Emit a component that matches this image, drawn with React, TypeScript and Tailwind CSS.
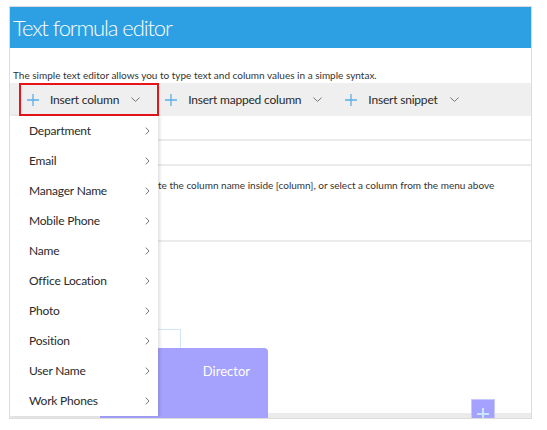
import React from "react";

const FONT = { fontFamily: '"Segoe UI", Lato, "Open Sans", sans-serif' };

const columns = [
  "Department",
  "Email",
  "Manager Name",
  "Mobile Phone",
  "Name",
  "Office Location",
  "Photo",
  "Position",
  "User Name",
  "Work Phones",
];

function Plus() {
  return (
    <svg width="12" height="12" viewBox="0 0 12 12" className="shrink-0">
      <path d="M6 0v12M0 6h12" stroke="#5aaee6" strokeWidth="1.3" fill="none" />
    </svg>
  );
}

function ChevronDown() {
  return (
    <svg width="9" height="5" viewBox="0 0 9 5" className="shrink-0">
      <path d="M0.4 0.6L4.5 4.4L8.6 0.6" stroke="#777" strokeWidth="1" fill="none" />
    </svg>
  );
}

function ChevronRight() {
  return (
    <svg width="5" height="8" viewBox="0 0 5 8" className="shrink-0">
      <path d="M0.8 0.6L4 4L0.8 7.4" stroke="#777" strokeWidth="1" fill="none" />
    </svg>
  );
}

function ToolButton({ label, active }: { label: string; active?: boolean }) {
  return (
    <div
      className={
        "flex h-[33px] shrink-0 items-center whitespace-nowrap pr-[17px] " +
        (active ? "border-2 border-[#e8141a] pl-[6px]" : "pl-[6px]")
      }
    >
      <Plus />
      <span className="ml-[11px] text-[12px] tracking-[-0.2px] text-[#2a2a2a]">{label}</span>
      <span className="ml-[12px]">
        <ChevronDown />
      </span>
    </div>
  );
}

export default function App() {
  return (
    <div className="h-[430px] w-[547px] bg-white pl-[9px] pt-[6px]" style={FONT}>
      <div className="relative flex h-[413px] w-[523px] flex-col overflow-hidden border border-[#dcdcdc]">
        <div className="flex h-[41px] shrink-0 items-center bg-[#2d9fe3] pl-[3px]">
          <span className="text-[22px] font-light leading-none tracking-[-1.1px] text-white">
            Text formula editor
          </span>
        </div>
        <div className="h-[35px] shrink-0 whitespace-nowrap pl-[3px] pt-[20px] text-[10px] leading-[14px] text-[#333]">
          The simple text editor allows you to type text and column values in a simple syntax.
        </div>
        <div className="flex h-[33px] shrink-0 items-center bg-[#efefef] pl-[9px]">
          <ToolButton label="Insert column" active />
          <ToolButton label="Insert mapped column" />
          <ToolButton label="Insert snippet" />
        </div>
        <div className="h-[25px] shrink-0 border-b-2 border-[#ebebeb]" />
        <div className="h-[25px] shrink-0 border-b-2 border-[#ebebeb]" />
        <div className="h-[76px] shrink-0 whitespace-nowrap border-b-2 border-[#ebebeb] pl-[148px] pt-[12px] text-[10px] leading-[14px] text-[#333]">
          te the column name inside [column], or select a column from the menu above
        </div>
        <div className="relative flex-1">
          <div className="absolute left-[90px] top-[87px] h-[20px] w-[81px] border border-[#cfe6f8]" />
          <div className="absolute left-[90px] top-[106px] flex h-[80px] w-[168px] justify-end rounded-tr-[4px] bg-[#a4a2fc] pr-[18px] pt-[14px]">
            <span className="text-[13px] text-white">Director</span>
          </div>
          <div className="absolute left-[461px] top-[157px] flex h-[24px] w-[24px] justify-center border border-[#c9c8fd] bg-[#a4a2fc] pt-[8px]">
            <svg width="12" height="12" viewBox="0 0 12 12">
              <path d="M6 0v12M0 6h12" stroke="#c9e6ff" strokeWidth="2" fill="none" />
            </svg>
          </div>
        </div>
        <div className="h-[5px] shrink-0 bg-[#ebebeb]" />

        <div className="absolute left-0 top-[109px] w-[148px] bg-white shadow-[2px_0_3px_rgba(0,0,0,0.12)]">
          {columns.map((c) => (
            <div key={c} className="flex h-[30px] items-center justify-between pl-[19px] pr-[8px]">
              <span className="text-[12px] tracking-[-0.2px] text-[#2a2a2a]">{c}</span>
              <ChevronRight />
            </div>
          ))}
        </div>
      </div>
    </div>
  );
}
